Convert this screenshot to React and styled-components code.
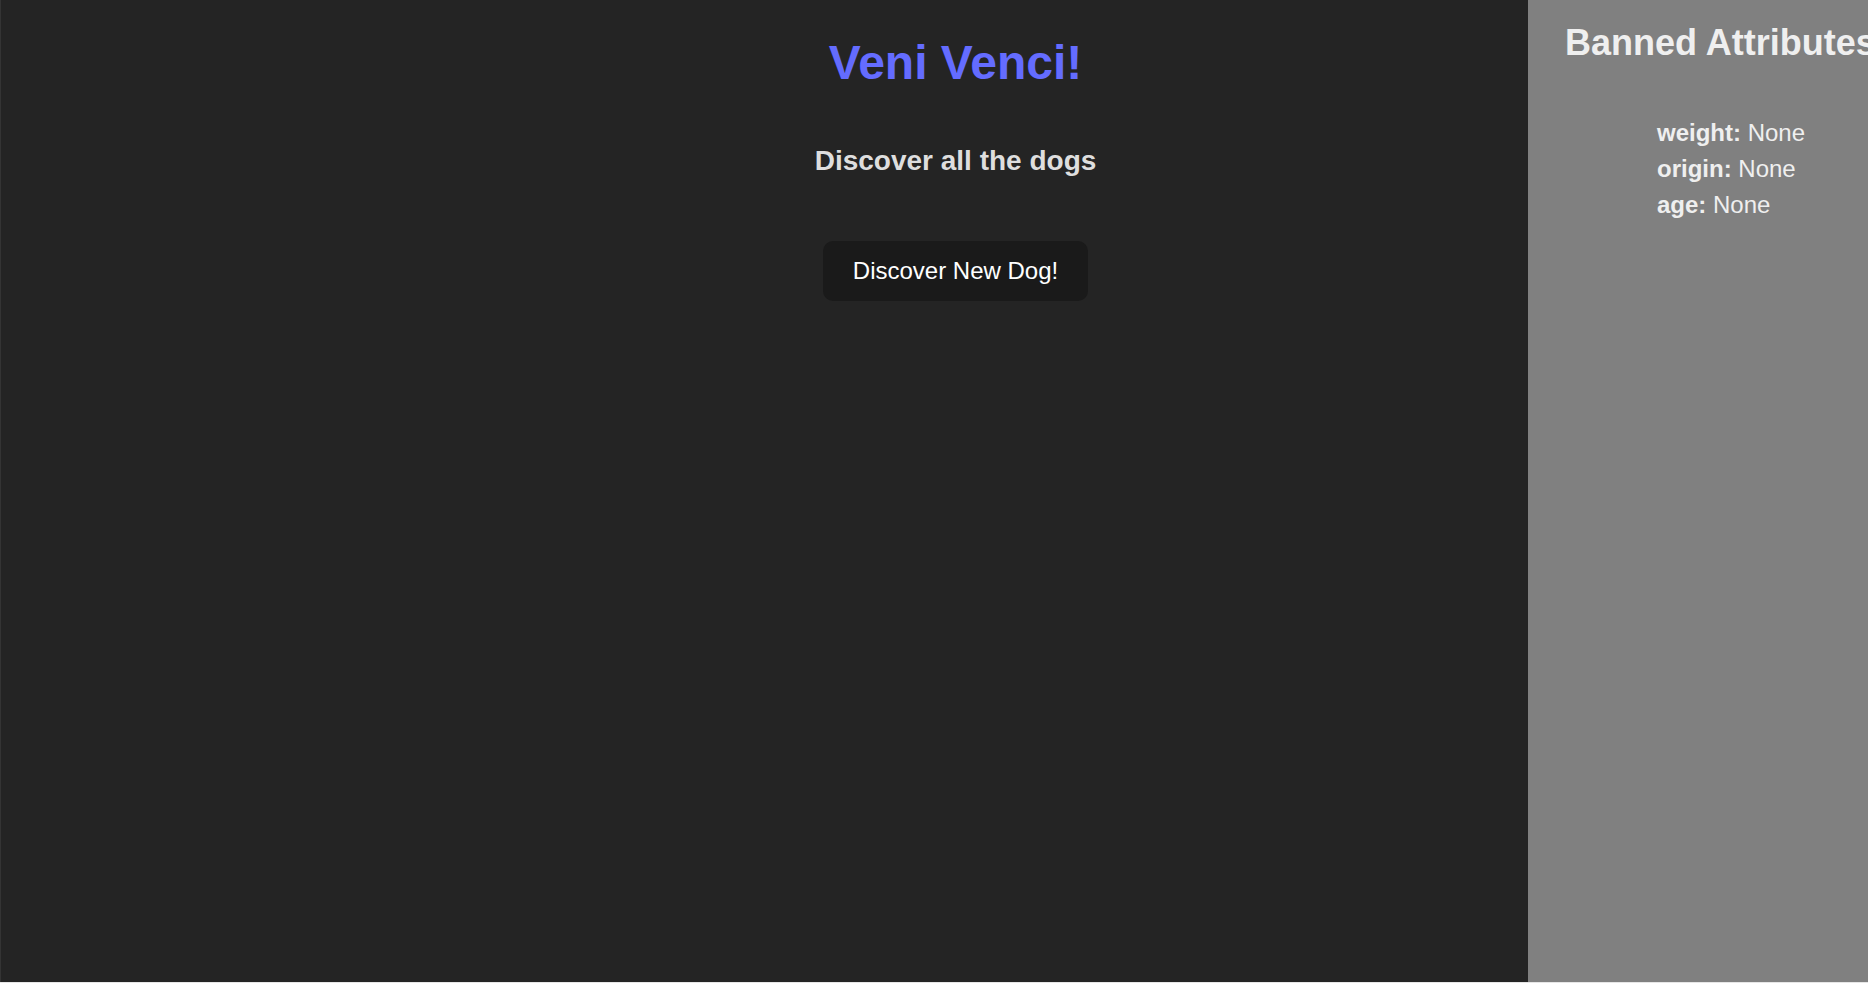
import React from "react";
import styled, { createGlobalStyle } from "styled-components";

const GlobalStyle = createGlobalStyle`
  html, body {
    margin: 0;
    padding: 0;
    background: #e6e6e6;
    overflow: hidden;
  }
  body {
    font-family: "Liberation Sans", Arial, sans-serif;
  }
`;

const Page = styled.div`
  display: flex;
  width: 100vw;
  height: 982px;
  overflow: hidden;
`;

const Main = styled.main`
  flex: 0 0 1528px;
  box-sizing: border-box;
  background: #242424;
  border-left: 1px solid #343434;
  padding-left: 382px;
  display: flex;
  flex-direction: column;
  align-items: center;
  color: rgba(255, 255, 255, 0.87);
`;

const Title = styled.h1`
  margin: 34px 0 0;
  font-size: 48px;
  line-height: 1.2;
  font-weight: 700;
  color: #646cff;
`;

const Subtitle = styled.h3`
  margin: 52px 0 0;
  font-size: 28px;
  line-height: 1.2;
  font-weight: 700;
  color: #dedede;
`;

const Button = styled.button`
  margin-top: 64px;
  padding: 14px 29px;
  font-family: inherit;
  font-size: 24px;
  line-height: 30px;
  color: #ffffff;
  background: #1a1a1a;
  border: 1px solid transparent;
  border-radius: 10px;
  cursor: pointer;
`;

const Sidebar = styled.aside`
  flex: 0 0 382px;
  box-sizing: border-box;
  background: #808080;
  padding: 21px 0 0 37px;
  color: rgba(255, 255, 255, 0.87);
  white-space: nowrap;
`;

const SideTitle = styled.h2`
  margin: 0;
  font-size: 36px;
  line-height: 1.2;
  font-weight: 700;
  color: #efefef;
`;

const BanList = styled.ul`
  list-style: none;
  margin: 51px 0 0;
  padding-left: 92px;
`;

const BanItem = styled.li`
  font-size: 24px;
  line-height: 36px;
  color: #efefef;

  b {
    font-weight: 700;
  }
`;

const banned = [
  { key: "weight", value: "None" },
  { key: "origin", value: "None" },
  { key: "age", value: "None" },
];

export default function App() {
  return (
    <>
      <GlobalStyle />
      <Page>
        <Main>
          <Title>Veni Venci!</Title>
          <Subtitle>Discover all the dogs</Subtitle>
          <Button>Discover New Dog!</Button>
        </Main>
        <Sidebar>
          <SideTitle>Banned Attributes</SideTitle>
          <BanList>
            {banned.map((b) => (
              <BanItem key={b.key}>
                <b>{b.key}:</b> {b.value}
              </BanItem>
            ))}
          </BanList>
        </Sidebar>
      </Page>
    </>
  );
}
